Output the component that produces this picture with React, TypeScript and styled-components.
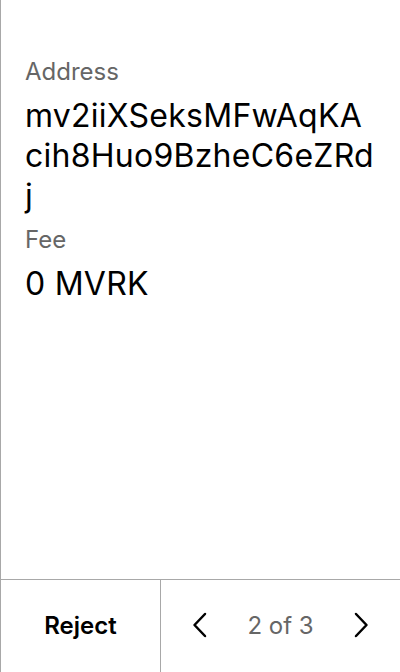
import React from 'react';
import styled, { createGlobalStyle } from 'styled-components';

const GlobalStyle = createGlobalStyle`
  html, body {
    margin: 0;
    padding: 0;
    background: #ffffff;
  }
  body {
    font-family: Inter, "Noto Sans", sans-serif;
  }
`;

const Screen = styled.div`
  display: flex;
  flex-direction: column;
  height: 672px;
  width: 400px;
  box-sizing: border-box;
  border-left: 1px solid #a8a8a8;
  background: #ffffff;
`;

const Body = styled.div`
  flex: 1;
  display: flex;
  flex-direction: column;
  padding: 58px 24px 0 24px;
`;

const Label = styled.div`
  font-size: 24px;
  line-height: 28px;
  color: #666666;
  margin-bottom: 10px;
`;

const Value = styled.div`
  font-size: 32px;
  line-height: 40px;
  letter-spacing: 0.25px;
  color: #000000;
  word-break: break-all;
  margin-bottom: 10px;
`;

const Footer = styled.div`
  display: flex;
  height: 92px;
  border-top: 1px solid #a8a8a8;
`;

const RejectButton = styled.button`
  width: 160px;
  border: none;
  border-right: 1px solid #a8a8a8;
  background: transparent;
  font-family: Inter, "Noto Sans", sans-serif;
  font-size: 24px;
  font-weight: 600;
  color: #000000;
  padding: 0 0 2px 0;
`;

const Pager = styled.div`
  flex: 1;
  display: flex;
  align-items: center;
  justify-content: space-between;
  padding: 0 27px 2px 27px;
`;

const Arrow = styled.button`
  display: flex;
  align-items: center;
  justify-content: center;
  width: 24px;
  height: 40px;
  border: none;
  background: transparent;
  padding: 0;
`;

const PageText = styled.span`
  font-size: 24px;
  color: #666666;
`;

const Chevron: React.FC<{ dir: 'left' | 'right' }> = ({ dir }) => (
  <svg width="16" height="28" viewBox="0 0 16 28" fill="none">
    <path
      d={dir === 'left' ? 'M13 3 L2.5 14 L13 25' : 'M3 3 L13.5 14 L3 25'}
      stroke="#000"
      strokeWidth="2.5"
      strokeLinecap="round"
      strokeLinejoin="round"
    />
  </svg>
);

const App: React.FC = () => {
  return (
    <>
      <GlobalStyle />
      <Screen>
        <Body>
          <Label>Address</Label>
          <Value>mv2iiXSeksMFwAqKAcih8Huo9BzheC6eZRdj</Value>
          <Label>Fee</Label>
          <Value>0 MVRK</Value>
        </Body>
        <Footer>
          <RejectButton>Reject</RejectButton>
          <Pager>
            <Arrow>
              <Chevron dir="left" />
            </Arrow>
            <PageText>2 of 3</PageText>
            <Arrow>
              <Chevron dir="right" />
            </Arrow>
          </Pager>
        </Footer>
      </Screen>
    </>
  );
};

export default App;
